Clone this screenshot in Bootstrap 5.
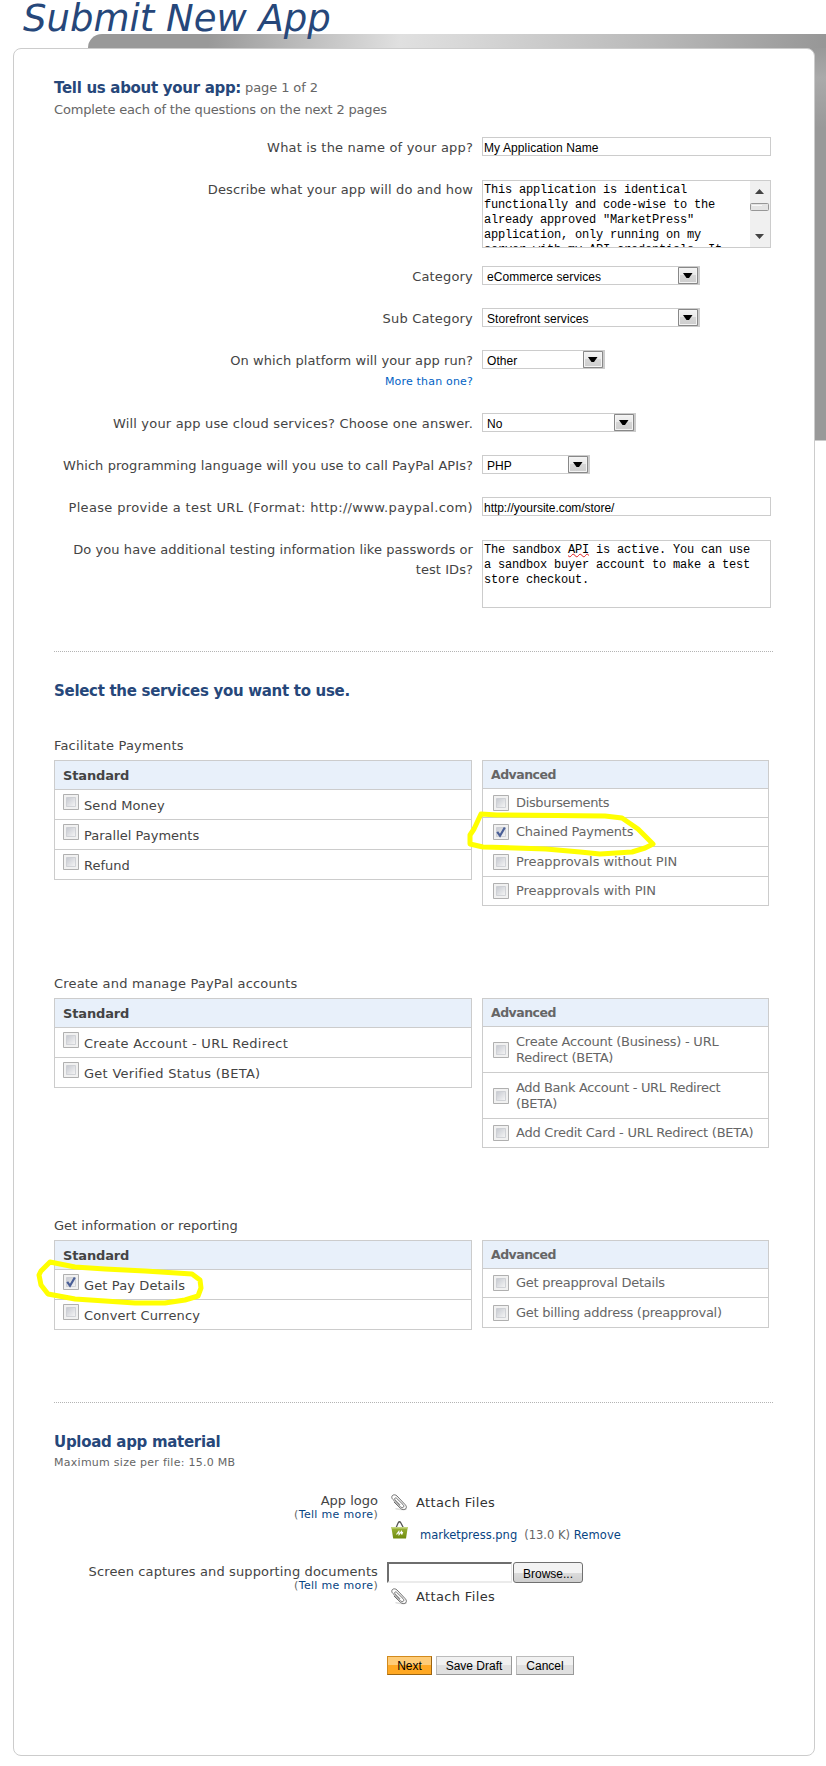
<!DOCTYPE html>
<html lang="en">
<head>
<meta charset="utf-8">
<meta name="viewport" content="width=device-width, initial-scale=1">
<title>Submit New App</title>
<link href="https://cdn.jsdelivr.net/npm/bootstrap@5.3.0/dist/css/bootstrap.min.css" rel="stylesheet">
<style>
body{font-family:"DejaVu Sans",sans-serif;font-size:13px;line-height:20px;color:#444;background:#fff;height:1766px;overflow:hidden}
a{text-decoration:none;color:#084482}
.page{width:826px;height:1766px;overflow:hidden}
.page-title{font-size:37px;line-height:38px;height:48px;padding-left:23px;font-style:italic;color:#26477a;position:relative;z-index:2;font-weight:400;white-space:nowrap}
.backdrop{left:88px;top:34px;width:738px;height:407px;border-top-left-radius:14px;border-bottom:1px solid #ccc;background:linear-gradient(#999,#aaa 30px,#999 80px,#999) right 14px/12px 100% no-repeat,linear-gradient(98deg,#999 0,#999 120px,#e0e0e0 310px,#d8d8d8 370px,#b9b9b9 560px,#979797 730px)}
.panel{margin-left:13px;width:802px;height:1708px;border:1px solid #ccc;border-radius:8px;background:#fff;padding:29px 40px 0;z-index:1}
h2{font-size:15px;line-height:20px;font-weight:700;color:#26477a;margin:0;letter-spacing:-.3px}
.muted{color:#666}
.pageno{font-size:13px;letter-spacing:-.1px}
.sub{letter-spacing:-.18px}
.k0{letter-spacing:.07px}.k1{letter-spacing:.12px}.k2{letter-spacing:.18px}.k3{letter-spacing:.27px}.k4{letter-spacing:.34px}
.frow{display:flex;width:718px}
.frow>label{width:419px;margin-right:9px;padding-top:1px;text-align:right;white-space:nowrap;flex:none}
.h42{height:42px}.h63{height:63px}.h87{height:87px}
.tinput,.sel{font:12px/17px "Liberation Sans",sans-serif;color:#000;border:1px solid #ccc;border-radius:0;background:#fff;height:19px;outline:0}
.tinput{width:289px;padding:2px 1px 0;letter-spacing:.1px}
.tinput.url{letter-spacing:-.04px}
.area{width:289px;height:68px;margin-top:1px;border:1px solid #ccc;padding:2px 1px 0;font:12px/15px "Liberation Mono",monospace;letter-spacing:-.2px;color:#000;overflow:hidden;white-space:pre;position:relative}
.sel{display:flex;justify-content:space-between;padding:0 0 0 4px;letter-spacing:.08px}
.sel span{padding-top:1.5px;height:17px}
.sel svg{flex:none}
.w218{width:218px}.w123{width:123px}.w154{width:154px}.w108{width:108px}
.sb{right:0;top:0}
.squiggle{text-decoration:underline wavy #e02020 1px;text-underline-offset:0}
.tiny{font-size:11px}
.dotted{border-top:1px dotted #b4b4b4;width:719px;height:0}
.svc{display:flex;align-items:flex-start;align-content:flex-start;flex-wrap:wrap;width:720px}
.svc>p{width:100%;height:24px;margin:0}
.list-group{--bs-list-group-border-radius:0;--bs-list-group-border-color:#ccc;--bs-list-group-color:#444}
.std{width:418px;margin-right:10px}
.adv{width:287px;--bs-list-group-color:#666;letter-spacing:-.25px}
.list-group-item{padding:0 8px;display:flex;height:30px;white-space:nowrap}
.list-group-item.hd{background:#e8f0fa;font-weight:700;padding-top:5px;height:30px;letter-spacing:-.15px}
.adv .list-group-item{height:29px;align-items:center;line-height:16.5px;padding:1px 8px 0 10px}
.adv .list-group-item.hd{padding:1px 8px 0;font-size:12.5px;letter-spacing:-.5px}
.adv .list-group-item.t30{height:30px}
.adv .list-group-item.two{height:46px}
.adv .pin{letter-spacing:-.07px}
.adv .tight{letter-spacing:-.35px}
.cb{width:16px;height:16px;flex:none}
.std .cb{margin:4px 5px 0 0}
.std .lb{padding-top:6px}
.adv .cb{margin-right:7px;margin-top:-1px}
.up{width:324px;margin-right:9px;text-align:right;line-height:15px}
.tm{font-size:11px;line-height:14px;letter-spacing:.33px}
.mini{font-size:11.5px}
.attach{color:#333;letter-spacing:.36px}
.btn{--bs-btn-padding-x:0;--bs-btn-padding-y:0;--bs-btn-border-radius:0;font:12px/17px "Liberation Sans",sans-serif;color:#000;height:19px;padding:1px 0 0;border:1px solid #999;border-top-color:#bbb;border-left-color:#bbb;background:linear-gradient(#f1f1f1 50%,#e0e0e0 50%)}
.btn.nx{border-color:#d28a1d #9b6412 #9b6412 #d28a1d;background:linear-gradient(#fecc78 50%,#ffa822 50%)}
.btn.br{height:21px;width:70px;border:1px solid #707070;border-radius:3px;background:linear-gradient(#f3f3f3 50%,#dcdcdc 50%,#cfcfcf);line-height:20px}
.filebox{width:125px;height:21px;border:2px solid #6e6e6e;border-right:1px solid #e6e6e6;border-bottom-color:#ebebeb;margin-right:1px}
.scrawl{left:0;top:0;z-index:3;pointer-events:none}
</style>
</head>
<body>
<svg width="0" height="0" class="position-absolute">
<defs>
<linearGradient id="g1" x1="0" y1="0" x2="1" y2="1"><stop offset="0" stop-color="#c6c9d0"/><stop offset="1" stop-color="#f6f6f6"/></linearGradient>
<linearGradient id="g2" x1="0" y1="0" x2="0" y2="1"><stop offset="0" stop-color="#f4f4f4"/><stop offset=".5" stop-color="#e8e8e8"/><stop offset=".5" stop-color="#d6d6d6"/><stop offset="1" stop-color="#cdcdcd"/></linearGradient>
<linearGradient id="g3" x1="0" y1="0" x2="0" y2="1"><stop offset="0" stop-color="#9cb53a"/><stop offset="1" stop-color="#6f8a0c"/></linearGradient>
<symbol id="box" viewBox="0 0 16 16"><path fill="#f1f1f1" d="M0 0h16v16H0z"/><path fill="none" stroke="#b0b0b0" d="M.5.5h15v15H.5z"/><path fill="url(#g1)" stroke="#c9cbd0" stroke-width=".8" d="M3.500 3.500h9v9h-9z"/></symbol>
<symbol id="boxon" viewBox="0 0 16 16"><use href="#box"/><path fill="none" stroke="#4a5f97" stroke-width="2.200" d="M4.200 7.800l2.800 3.900L11.800 3.500"/></symbol>
<symbol id="drop" viewBox="0 0 21 17" preserveAspectRatio="none"><path fill="#ccc" d="M0 0h21v17H0z"/><path fill="url(#g2)" stroke="#888" d="M.5.5h19v16H.5z"/><path fill="none" stroke="#f4f4f4" d="M1.500 1.500h17v14h-17z"/><path d="M5 6h9.500l-3.500 5h-2.500z"/></symbol>
<symbol id="clip" viewBox="0 0 17 17"><g fill="none" stroke-linecap="round"><path stroke="#ddd" stroke-width="1.400" d="M5 14.800c3 .8 7 1 10 .4"/><path stroke="#666" stroke-width=".95" d="M3.200 8.200l6.300 6.200c1.500 1.400 4.300 1.600 5.300.4.900-1.300.7-2.700-.5-4L6 2C4.500.5 2.300.5 1.300 1.700.4 2.900.7 4.200 1.800 5.400l7.700 7.400c1 .9 2.200 1 2.900.4.700-.8.500-1.700-.4-2.700L5.600 4.300c-.6-.5-1.500-.5-1.800 0-.4.500-.1 1.200.4 1.700l4.600 4.600"/></g></symbol>
</defs>
</svg>
<main class="page position-relative">
<div class="backdrop position-absolute"></div>
<h1 class="page-title m-0">Submit New App</h1>
<div class="panel position-relative">
  <h2 class="d-flex gap-1"><span>Tell us about your app:</span><span class="muted fw-normal pageno">page 1 of 2</span></h2>
  <div class="muted" style="margin-top:2px;height:37px"><span class="sub">Complete each of the questions on the next 2 pages</span></div>

  <div class="frow h42"><label class="k2">What is the name of your app?</label><input class="tinput" value="My Application Name"></div>
  <div class="frow h87"><label class="k1">Describe what your app will do and how</label><div class="area">This application is identical
functionally and code-wise to the
already approved "MarketPress"
application, only running on my
server with my API credentials. It<svg class="sb position-absolute" width="20" height="66"><path fill="#f0f0f0" d="M0 0h20v66H0z"/><path fill="#444" d="M5 13l4.500-5 4.500 5zM5 53l4.500 5 4.500-5z"/><rect x=".5" y="22.500" width="18" height="7" rx="1" fill="#e4e4e4" stroke="#979797"/><path stroke="#f8f8f8" d="M2 24.500h10"/></svg></div></div>
  <div class="frow h42"><label class="k2">Category</label><div class="sel w218"><span>eCommerce services</span><svg width="21" height="17"><use href="#drop"/></svg></div></div>
  <div class="frow h42"><label class="k2">Sub Category</label><div class="sel w218"><span>Storefront services</span><svg width="21" height="17"><use href="#drop"/></svg></div></div>
  <div class="frow h63"><label class="k0">On which platform will your app run?<br><a href="#" class="tiny k2" style="color:#0062c4">More than one?</a></label><div class="sel w123"><span>Other</span><svg width="21" height="17"><use href="#drop"/></svg></div></div>
  <div class="frow h42"><label class="k2">Will your app use cloud services? Choose one answer.</label><div class="sel w154"><span>No</span><svg width="21" height="17"><use href="#drop"/></svg></div></div>
  <div class="frow h42"><label class="k0">Which programming language will you use to call PayPal APIs?</label><div class="sel w108"><span>PHP</span><svg width="21" height="17"><use href="#drop"/></svg></div></div>
  <div class="frow h42"><label class="k4">Please provide a test URL (Format: http://www.paypal.com)</label><input class="tinput url" value="http://yoursite.com/store/"></div>
  <div class="frow" style="height:112px"><label class="k0">Do you have additional testing information like passwords or<br>test IDs?</label><div class="area">The sandbox <span class="squiggle">API</span> is active. You can use
a sandbox buyer account to make a test
store checkout.</div></div>

  <div class="dotted"></div>
  <h2 style="padding-top:29px;height:84px">Select the services you want to use.</h2>

  <section class="svc" style="height:238px"><p class="k2">Facilitate Payments</p>
    <ul class="list-group std"><li class="list-group-item hd">Standard</li>
      <li class="list-group-item"><svg class="cb"><use href="#box"/></svg><span class="lb k0">Send Money</span></li>
      <li class="list-group-item"><svg class="cb"><use href="#box"/></svg><span class="lb">Parallel Payments</span></li>
      <li class="list-group-item"><svg class="cb"><use href="#box"/></svg><span class="lb">Refund</span></li></ul>
    <ul class="list-group adv"><li class="list-group-item hd">Advanced</li>
      <li class="list-group-item"><svg class="cb"><use href="#box"/></svg><span class="tight">Disbursements</span></li>
      <li class="list-group-item"><svg class="cb"><use href="#boxon"/></svg><span>Chained Payments</span></li>
      <li class="list-group-item t30"><svg class="cb"><use href="#box"/></svg><span class="pin">Preapprovals without PIN</span></li>
      <li class="list-group-item"><svg class="cb"><use href="#box"/></svg><span class="pin">Preapprovals with PIN</span></li></ul>
  </section>
  <section class="svc" style="height:242px"><p class="k2">Create and manage PayPal accounts</p>
    <ul class="list-group std"><li class="list-group-item hd">Standard</li>
      <li class="list-group-item"><svg class="cb"><use href="#box"/></svg><span class="lb k3">Create Account - URL Redirect</span></li>
      <li class="list-group-item"><svg class="cb"><use href="#box"/></svg><span class="lb k3">Get Verified Status (BETA)</span></li></ul>
    <ul class="list-group adv"><li class="list-group-item hd">Advanced</li>
      <li class="list-group-item two"><svg class="cb"><use href="#box"/></svg><span>Create Account (Business) - URL<br>Redirect (BETA)</span></li>
      <li class="list-group-item two"><svg class="cb"><use href="#box"/></svg><span class="tight">Add Bank Account - URL Redirect<br>(BETA)</span></li>
      <li class="list-group-item"><svg class="cb"><use href="#box"/></svg><span>Add Credit Card - URL Redirect (BETA)</span></li></ul>
  </section>
  <section class="svc" style="height:186px"><p>Get information or reporting</p>
    <ul class="list-group std"><li class="list-group-item hd">Standard</li>
      <li class="list-group-item"><svg class="cb"><use href="#boxon"/></svg><span class="lb k1">Get Pay Details</span></li>
      <li class="list-group-item"><svg class="cb"><use href="#box"/></svg><span class="lb k1">Convert Currency</span></li></ul>
    <ul class="list-group adv"><li class="list-group-item hd">Advanced</li>
      <li class="list-group-item"><svg class="cb"><use href="#box"/></svg><span>Get preapproval Details</span></li>
      <li class="list-group-item t30"><svg class="cb"><use href="#box"/></svg><span>Get billing address (preapproval)</span></li></ul>
  </section>

  <div class="dotted"></div>
  <h2 style="padding-top:29px;height:50px">Upload app material</h2>
  <div class="muted tiny k3" style="height:40px">Maximum size per file: 15.0 MB</div>

  <div class="d-flex" style="height:69px">
    <div class="up">App logo<div class="tm muted">(<a href="#">Tell me more</a>)</div></div>
    <div class="ps-1">
      <div class="d-flex attach" style="height:27px"><svg width="17" height="17" style="margin:1px 8px 0 0"><use href="#clip"/></svg><span>Attach Files</span></div>
      <div class="d-flex mini muted"><svg width="18" height="18" viewBox="0 0 18 18" style="margin:1px 11px 0 0"><path fill="none" stroke="#555" stroke-width="1.300" d="M4.500 8L7.200 1.800Q8.500-.3 9.800 1.800L13 8"/><path fill="url(#g3)" d="M.3 6h16.500l-1.800 11.500H2.200z"/><path fill="#c2d47c" d="M.3 6h16.500l-.3 1.500H.6z"/><path fill="none" stroke="#fff" stroke-width="1.200" d="M5.500 13.500l2.300-3 .3 3 2.300-3 .3 3 1-2.600"/></svg><span style="padding-top:5px"><a href="#" style="margin-right:7px">marketpress.png</a>(13.0 K) <a href="#" class="k1">Remove</a></span></div>
    </div>
  </div>
  <div class="d-flex" style="height:94px">
    <div class="up k1" style="padding-top:2px">Screen captures and supporting documents<div class="tm muted">(<a href="#">Tell me more</a>)</div></div>
    <div>
      <div class="d-flex" style="height:25px"><div class="filebox"></div><button class="btn br">Browse...</button></div>
      <div class="d-flex ps-1 attach"><svg width="17" height="17" style="margin:1px 8px 0 0"><use href="#clip"/></svg><span>Attach Files</span></div>
    </div>
  </div>
  <div class="d-flex" style="padding-left:333px;gap:4px"><button class="btn nx" style="width:45px">Next</button><button class="btn" style="width:76px">Save Draft</button><button class="btn" style="width:58px">Cancel</button></div>
</div>
<!-- highlighter loops -->
<svg class="scrawl position-absolute" width="826" height="1766" fill="none" stroke="#ff0" stroke-width="5" stroke-linejoin="round" stroke-linecap="square">
<path d="M481 814L497 815 605 816 622 818 638 829 653 844 645 848 632 852 600 854 580 852 546 849 483 847 470 844 470 835 474 829z"/>
<path d="M50 1262L75 1267 105 1269 145 1271 192 1274 200 1280 201 1288 198 1296 185 1300 165 1303 135 1303 75 1299 48 1294 41 1285 39 1275 41 1271z"/>
</svg>
</main>
<script src="https://cdn.jsdelivr.net/npm/bootstrap@5.3.0/dist/js/bootstrap.bundle.min.js"></script>
</body>
</html>
